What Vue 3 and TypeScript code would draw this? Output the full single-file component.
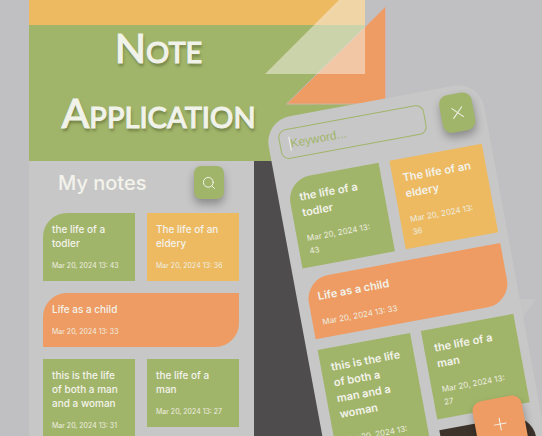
<script setup lang="ts">
interface Note {
  title: string
  date: string
  tone: 'green' | 'yellow' | 'orange' | 'dark'
  shape?: 'leaf' | 'corner' | 'tail'
  span?: 'wide' | 'tall'
}

const notes: Note[] = [
  { title: 'the life of a todler', date: 'Mar 20, 2024 13: 43', tone: 'green', shape: 'corner' },
  { title: 'The life of an eldery', date: 'Mar 20, 2024 13: 36', tone: 'yellow' },
  { title: 'Life as a child', date: 'Mar 20, 2024 13: 33', tone: 'orange', shape: 'leaf', span: 'wide' },
  { title: 'this is the life of both a man and a woman', date: 'Mar 20, 2024 13: 31', tone: 'green', span: 'tall' },
  { title: 'the life of a man', date: 'Mar 20, 2024 13: 27', tone: 'green' },
]
const searchNotes: Note[] = [...notes, { title: '', date: '', tone: 'dark', shape: 'tail' }]
</script>

<template>
  <main class="poster">
    <div class="column">
      <header class="hero">
        <h1>Note<br />Application</h1>
      </header>
      <section class="screen">
        <div class="bar">
          <h2>My notes</h2>
          <button class="tool" type="button" aria-label="Search">
            <svg viewBox="0 0 14 14" width="14" height="14"><circle cx="6.3" cy="6.3" r="4.9" /><path d="M9.9 9.9 12.5 12.5" /></svg>
          </button>
        </div>
        <div class="notes">
          <article v-for="n in notes" :key="n.date" class="note" :class="[n.tone, n.shape, n.span]">
            <h3>{{ n.title }}</h3>
            <time>{{ n.date }}</time>
          </article>
        </div>
      </section>
    </div>
    <div class="shade"></div>

    <svg class="triangles" viewBox="0 0 124 108" width="124" height="108" aria-hidden="true">
      <path d="M121.500 7V104H23Z" fill="#ee9c63" stroke="#d3b3a9" stroke-width="1" />
      <path d="M101 -26V74H1Z" fill="#f3f1e9" fill-opacity=".5" />
    </svg>
    <svg class="spark" viewBox="0 0 36 150" width="36" height="150" aria-hidden="true">
      <path d="M8 13H30L17 31 20 60 32 110V150H0Z" fill="#c5c5c6" />
    </svg>

    <section class="phone">
      <div class="finder">
        <div class="field">
          <i class="caret"></i>
          <input type="text" placeholder="Keyword..." aria-label="Keyword" />
        </div>
        <button class="tool" type="button" aria-label="Close">
          <svg viewBox="0 0 14 14" width="14" height="14"><path d="M2 2 12 12M12 2 2 12" /></svg>
        </button>
      </div>
      <div class="notes">
        <article v-for="n in searchNotes" :key="n.date" class="note" :class="[n.tone, n.shape, n.span]">
          <h3>{{ n.title }}</h3>
          <time>{{ n.date }}</time>
        </article>
      </div>
      <button class="add" type="button" aria-label="Add note">
        <svg viewBox="0 0 14 14" width="14" height="14"><path d="M7 1V13M1 7H13" /></svg>
      </button>
    </section>
  </main>
</template>

<style>
body {
  background: #c0c0c2;
}
</style>

<style scoped>
.poster {
  position: relative;
  display: flex;
  height: 100vh;
  overflow: hidden;
  padding-left: 29px;
  box-sizing: border-box;
  background: #c0c0c2;
  color: #f3f3ec;
  font-family: Inter, 'Open Sans', sans-serif;
}
.column {
  display: flex;
  flex-direction: column;
  flex: 0 0 225px;
  min-width: 0;
}
.hero {
  flex: none;
  box-sizing: border-box;
  width: 336px;
  height: 161px;
  padding-right: 77px;
  border-top: 25px solid #edba62;
  background: #a1b56a;
}
h1,
h2,
h3 {
  margin: 0;
  font-weight: 500;
}
h1 {
  margin-top: -10px;
  font-family: Lato, sans-serif;
  font-size: 41px;
  line-height: 65px;
  font-variant: small-caps;
  text-align: center;
  color: #f1f3ea;
  -webkit-text-stroke: 1px #f1f3ea;
  text-shadow: 1px 3px 3px rgba(60, 70, 30, 0.5);
}
.screen {
  flex: 1 0 auto;
  padding: 0 15px 0 14px;
  background: #c7c7c7;
}
.bar {
  display: flex;
  align-items: center;
  justify-content: space-between;
  height: 43px;
  padding: 0 15px 9px;
}
h2 {
  font-size: 20px;
  line-height: 24px;
}
.tool,
.add {
  display: grid;
  place-items: center;
  padding: 0;
  border: 0;
  background: #a1b56a;
}
.tool {
  width: 30px;
  height: 33px;
  border-radius: 7px;
  box-shadow: 0 5px 8px rgba(0, 0, 0, 0.3);
}
svg {
  fill: none;
  stroke: #f3f3ec;
  stroke-width: 1;
  stroke-linecap: round;
}
.notes {
  display: grid;
  grid-template-columns: 1fr 1fr;
  gap: 12px;
  align-items: start;
}
.note {
  display: flex;
  flex-direction: column;
  gap: 10px;
  padding: 9px;
}
.wide {
  grid-column: span 2;
}
.tall {
  grid-row: span 2;
}
.green {
  background: #a1b56a;
}
.yellow {
  background: #edba62;
}
.orange {
  background: #ee9c63;
}
.dark {
  min-height: 80px;
  background: #3e332b;
}
.corner {
  border-top-left-radius: 24px;
}
.leaf {
  border-radius: 24px 0;
}
.tail {
  border-top-right-radius: 24px;
}
h3 {
  font-size: 10px;
  line-height: 14px;
}
time {
  font-size: 7px;
  line-height: 12px;
  color: #eeeee0;
}
.shade {
  flex: 0 0 130px;
  margin-top: 161px;
  background: #4e4c4d;
}
.triangles,
.spark {
  position: absolute;
  top: 0;
  left: 264px;
  stroke: none;
}
.spark {
  top: 286px;
  left: 506px;
}
.phone {
  position: absolute;
  top: 121px;
  left: 264px;
  box-sizing: border-box;
  width: 219px;
  min-height: 430px;
  padding: 8px 9px 8px 11px;
  border-radius: 26px;
  background: #c7c7c7;
  transform: rotate(-10.5deg);
  transform-origin: 0 0;
}
.finder {
  display: flex;
  align-items: center;
  justify-content: space-between;
  padding-right: 2px;
  margin-bottom: 16px;
}
.phone .tool {
  width: 33px;
  height: 38px;
  border-radius: 9px;
}
.field {
  display: flex;
  align-items: center;
  box-sizing: border-box;
  width: 148px;
  height: 30px;
  padding: 0 9px;
  border: 1px solid #a1b56a;
  border-radius: 8px;
}
.caret {
  width: 1px;
  height: 14px;
  background: #f3f3ec;
}
input {
  flex: 1;
  min-width: 0;
  padding: 0;
  border: 0;
  outline: 0;
  background: none;
  color: #a1b56a;
  font: 500 12px 'Liberation Sans', sans-serif;
}
input::placeholder {
  color: #a1b56a;
  opacity: 1;
}
.phone .notes {
  gap: 11px;
}
.phone .note {
  gap: 12px;
  padding: 11px 12px 9px 10px;
}
.phone h3 {
  font-size: 11px;
  font-weight: 600;
  line-height: 16px;
}
.phone time {
  font-size: 8px;
  line-height: 13px;
}
.add {
  position: absolute;
  top: 315px;
  right: 17px;
  width: 50px;
  height: 52px;
  border-radius: 10px;
  background: #ee9c63;
  box-shadow: 0 5px 8px rgba(0, 0, 0, 0.3);
}
</style>
